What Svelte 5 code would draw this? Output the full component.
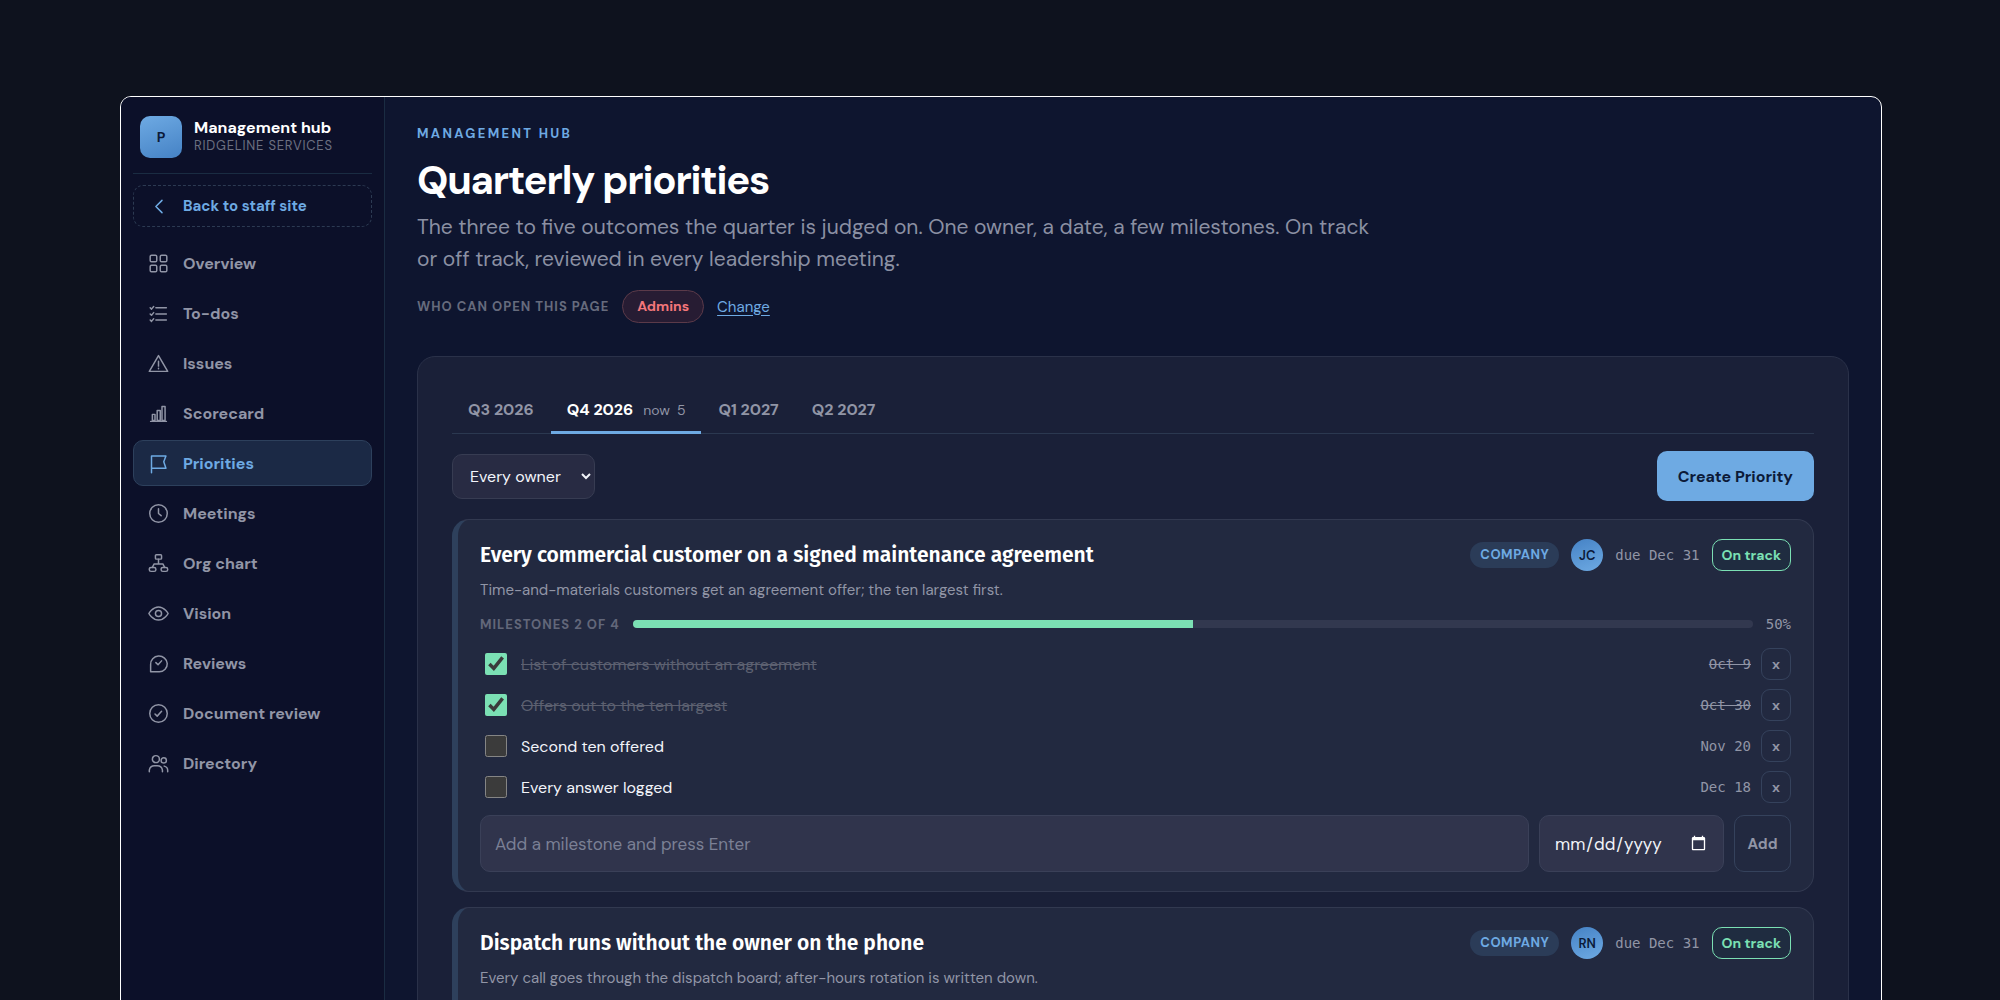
<script>
  const nav = [
    { id: 'overview', label: 'Overview' },
    { id: 'todos', label: 'To-dos' },
    { id: 'issues', label: 'Issues' },
    { id: 'scorecard', label: 'Scorecard' },
    { id: 'priorities', label: 'Priorities' },
    { id: 'meetings', label: 'Meetings' },
    { id: 'org', label: 'Org chart' },
    { id: 'vision', label: 'Vision' },
    { id: 'reviews', label: 'Reviews' },
    { id: 'documents', label: 'Document review' },
    { id: 'directory', label: 'Directory' }
  ];

  const quarters = ['Q3 2026', 'Q4 2026', 'Q1 2027', 'Q2 2027'];
  const currentQuarter = 'Q4 2026';

  let page = $state('priorities');
  let quarter = $state(currentQuarter);
  let owner = $state('');

  let priorities = $state([
    {
      id: 1,
      title: 'Every commercial customer on a signed maintenance agreement',
      description: 'Time-and-materials customers get an agreement offer; the ten largest first.',
      owner: 'JC',
      due: 'Dec 31',
      milestones: [
        { text: 'List of customers without an agreement', due: 'Oct 9', done: true },
        { text: 'Offers out to the ten largest', due: 'Oct 30', done: true },
        { text: 'Second ten offered', due: 'Nov 20', done: false },
        { text: 'Every answer logged', due: 'Dec 18', done: false }
      ]
    },
    {
      id: 2,
      title: 'Dispatch runs without the owner on the phone',
      description: 'Every call goes through the dispatch board; after-hours rotation is written down.',
      owner: 'RN',
      due: 'Dec 31',
      milestones: []
    }
  ]);

  function doneCount(priority) {
    return priority.milestones.filter((m) => m.done).length;
  }

  function percent(priority) {
    return Math.round((doneCount(priority) / priority.milestones.length) * 100);
  }

  function removeMilestone(priority, index) {
    priority.milestones.splice(index, 1);
  }

  function addMilestone(e, priority) {
    e.preventDefault();
    const text = e.target.elements.text.value.trim();
    if (!text) return;
    priority.milestones.push({ text, due: e.target.elements.due.value, done: false });
    e.target.reset();
  }
</script>

{#snippet icon(name)}
  <svg class="icon" viewBox="0 0 24 24" aria-hidden="true">
    {#if name === 'back'}
      <path d="M16 5l-7 7 7 7" />
    {:else if name === 'overview'}
      <rect x="2.500" y="2.500" width="7.500" height="7.500" rx="1.500" />
      <rect x="14" y="2.500" width="7.500" height="7.500" rx="1.500" />
      <rect x="2.500" y="14" width="7.500" height="7.500" rx="1.500" />
      <rect x="14" y="14" width="7.500" height="7.500" rx="1.500" />
    {:else if name === 'todos'}
      <path d="M9 5.500h12M9 12.500h12M9 19.500h12" />
      <path d="M2.500 5.500L4 7l2.500-3M2.500 12.500L4 14l2.500-3M2.500 19.500L4 21l2.500-3" />
    {:else if name === 'issues'}
      <path d="M12 3L22.500 21h-21z" />
      <path d="M12 9.500v5.500M12 17.500v.5" />
    {:else if name === 'scorecard'}
      <path d="M3 21h18" />
      <rect x="5" y="13" width="3" height="7" />
      <rect x="10.500" y="8.500" width="3.500" height="11.500" />
      <rect x="16" y="4" width="3.500" height="16" />
    {:else if name === 'priorities'}
      <path d="M4 22.500V3.500h16.500L18 10l2.500 7.500H4" />
    {:else if name === 'meetings'}
      <circle cx="12" cy="12" r="10" />
      <path d="M12 6.500V12l3 2.500" />
    {:else if name === 'org'}
      <rect x="8.500" y="2" width="7" height="5" rx="1" />
      <rect x="1.500" y="16.500" width="7.500" height="4.500" rx="2" />
      <rect x="15" y="16.500" width="7.500" height="4.500" rx="2" />
      <path d="M12 7v5M5 16.500l2-4h10l2 4" />
    {:else if name === 'vision'}
      <path d="M1 12S5 4.500 12 4.500 23 12 23 12 19 19.500 12 19.500 1 12 1 12z" />
      <circle cx="12" cy="12" r="3.500" />
    {:else if name === 'reviews'}
      <path d="M3 21.500v-8.500A9.500 9 0 1 1 13 21.500z" />
      <path d="M9 11l2.500 2.500 4-4.500" />
    {:else if name === 'documents'}
      <circle cx="12" cy="12" r="10" />
      <path d="M8 12.500l2.500 2.500 5-5.500" />
    {:else}
      <circle cx="9" cy="7" r="4" />
      <path d="M1.500 21.500v-2a6 6 0 0 1 6-5h3a6 6 0 0 1 6 5v2" />
      <circle cx="18" cy="8.500" r="3" />
      <path d="M18.500 15a5 5 0 0 1 4 5v1.500" />
    {/if}
  </svg>
{/snippet}

<div class="page">
  <div class="app">
    <aside class="sidebar">
      <div class="brand">
        <span class="logo">P</span>
        <div class="brand-text">
          <strong>Management hub</strong>
          <span>Ridgeline Services</span>
        </div>
      </div>

      <a class="back" href="#staff">{@render icon('back')}Back to staff site</a>

      <nav>
        {#each nav as item}
          <a
            href="#{item.id}"
            class:active={page === item.id}
            aria-current={page === item.id ? 'page' : undefined}
            onclick={() => (page = item.id)}
          >
            {@render icon(item.id)}{item.label}
          </a>
        {/each}
      </nav>
    </aside>

    <main>
      <p class="eyebrow">Management hub</p>
      <h1>Quarterly priorities</h1>
      <p class="lede">
        The three to five outcomes the quarter is judged on. One owner, a date, a few milestones. On track or off
        track, reviewed in every leadership meeting.
      </p>
      <div class="access">
        <span class="access-label">Who can open this page</span>
        <span class="chip">Admins</span>
        <a href="#access">Change</a>
      </div>

      <section class="panel">
        <div class="tabs" role="tablist">
          {#each quarters as q}
            <button
              type="button"
              role="tab"
              aria-selected={quarter === q}
              class:selected={quarter === q}
              onclick={() => (quarter = q)}
            >
              {q}
              {#if q === currentQuarter}<span class="count"><span>now</span><span>5</span></span>{/if}
            </button>
          {/each}
        </div>

        <div class="toolbar">
          <select aria-label="Owner" bind:value={owner}>
            <option value="">Every owner</option>
            <option value="JC">JC</option>
            <option value="RN">RN</option>
          </select>
          <button type="button" class="primary">Create Priority</button>
        </div>

        {#each priorities as priority (priority.id)}
          <article class="card">
            <header>
              <h2>{priority.title}</h2>
              <span class="tag">Company</span>
              <span class="avatar">{priority.owner}</span>
              <span class="mono">due {priority.due}</span>
              <button type="button" class="status">On track</button>
            </header>
            <p class="description">{priority.description}</p>

            {#if priority.milestones.length}
              <div class="progress">
                <span class="progress-label">Milestones {doneCount(priority)} of {priority.milestones.length}</span>
                <div class="track"><div class="fill" style="width: {percent(priority)}%"></div></div>
                <span class="mono">{percent(priority)}%</span>
              </div>
            {/if}

            <ul>
              {#each priority.milestones as milestone, i}
                <li class:done={milestone.done}>
                  <label>
                    <input type="checkbox" bind:checked={milestone.done} />
                    <span>{milestone.text}</span>
                  </label>
                  <span class="mono">{milestone.due}</span>
                  <button type="button" class="remove" aria-label="Remove milestone" onclick={() => removeMilestone(priority, i)}>x</button>
                </li>
              {/each}
            </ul>

            <form onsubmit={(e) => addMilestone(e, priority)}>
              <input type="text" name="text" aria-label="Milestone" placeholder="Add a milestone and press Enter" />
              <input type="date" name="due" aria-label="Milestone date" />
              <button type="submit">Add</button>
            </form>
          </article>
        {/each}
      </section>
    </main>
  </div>
</div>

<style>
  :global(body) {
    background: #0e121e;
    color-scheme: dark;
  }

  .page {
    --accent: #6eaae3;
    --muted: #9195a6;
    --faint: #666b7d;
    --line: #2b3850;
    --green: #7be0b4;
    box-sizing: border-box;
    height: 100vh;
    overflow: hidden;
    padding: 96px 118px 0 120px;
    color: #f2f4fa;
    font-family: 'DM Sans', Inter, sans-serif;
    font-size: 16px;
  }

  .page :global(*) {
    box-sizing: border-box;
  }

  button,
  input,
  select {
    font-family: inherit;
  }

  .app {
    display: flex;
    border: 1px solid #fff;
    border-radius: 11px;
    background: #0e152f;
    overflow: hidden;
  }

  .sidebar {
    flex: 0 0 264px;
    padding: 10px 12px;
    background: #0c1029;
    border-right: 1px solid #1a2c42;
  }

  .brand {
    display: flex;
    align-items: center;
    gap: 12px;
    padding: 9px 7px 15px;
    margin-bottom: 11px;
    border-bottom: 1px solid #1a2c42;
  }

  .logo {
    display: grid;
    place-items: center;
    width: 42px;
    height: 42px;
    border-radius: 10px;
    background: linear-gradient(160deg, #6eaae3, #4582c5);
    color: #0c1a38;
    font-size: 14px;
    font-weight: 700;
  }

  .brand-text {
    display: flex;
    flex-direction: column;
    line-height: 18px;
  }

  .brand-text strong {
    color: #fff;
    font-size: 16px;
  }

  .brand-text span {
    color: #6b6f80;
    font-size: 13px;
    letter-spacing: 0.06em;
    text-transform: uppercase;
  }

  .icon {
    flex: none;
    width: 21px;
    height: 21px;
    fill: none;
    stroke: currentColor;
    stroke-width: 1.7;
    stroke-linecap: round;
    stroke-linejoin: round;
  }

  .back,
  nav a {
    display: flex;
    align-items: center;
    gap: 14px;
    padding: 0 14px;
    border: 1px solid transparent;
    border-radius: 10px;
    color: var(--muted);
    font-size: 16px;
    font-weight: 700;
    text-decoration: none;
  }

  .back {
    height: 42px;
    margin-bottom: 13px;
    border: 1px dashed #2c3a52;
    color: var(--accent);
    font-size: 15px;
  }

  nav {
    display: flex;
    flex-direction: column;
    gap: 4px;
  }

  nav a {
    height: 46px;
  }

  nav a.active {
    background: #1b2945;
    border-color: #2d405c;
    color: var(--accent);
  }

  main {
    flex: 1;
    min-width: 0;
    padding: 27px 32px 32px;
  }

  .eyebrow {
    margin: 0;
    color: var(--accent);
    font-size: 13px;
    font-weight: 700;
    letter-spacing: 0.18em;
    line-height: 20px;
    text-transform: uppercase;
  }

  h1 {
    margin: 12px 0 7px;
    color: #fff;
    font-size: 40px;
    font-weight: 700;
    letter-spacing: -0.03em;
    line-height: 48px;
  }

  .lede {
    max-width: 960px;
    margin: 0;
    color: #8b90a3;
    font-size: 21px;
    line-height: 32px;
  }

  .access {
    display: flex;
    align-items: center;
    gap: 13px;
    margin: 15px 0 33px;
  }

  .access-label {
    color: var(--faint);
    font-size: 13px;
    font-weight: 700;
    letter-spacing: 1px;
    text-transform: uppercase;
  }

  .chip {
    padding: 0 14px;
    border: 1px solid #5b3a49;
    border-radius: 17px;
    background: #271c33;
    color: #f4767a;
    font-size: 14px;
    font-weight: 700;
    line-height: 31px;
  }

  .access a {
    color: var(--accent);
    font-size: 15px;
    text-underline-offset: 3px;
  }

  .panel {
    padding: 31px 34px;
    border: 1px solid #2a3149;
    border-radius: 18px;
    background: #1a2038;
  }

  .tabs {
    display: flex;
    gap: 1px;
    margin-bottom: 17px;
    border-bottom: 1px solid var(--line);
  }

  .tabs button {
    display: flex;
    align-items: center;
    gap: 10px;
    height: 46px;
    margin-bottom: -1px;
    padding: 0 16px;
    border: 0;
    border-bottom: 3px solid transparent;
    background: none;
    color: var(--muted);
    font-size: 16px;
    font-weight: 700;
  }

  .tabs button.selected {
    border-bottom-color: var(--accent);
    color: #fff;
  }

  .count {
    display: flex;
    gap: 7px;
    color: var(--muted);
    font-size: 14px;
    font-weight: 400;
  }

  .toolbar {
    display: flex;
    align-items: center;
    justify-content: space-between;
    margin-bottom: 18px;
  }

  select {
    width: 143px;
    height: 45px;
    padding: 0 0 0 13px;
    border: 1px solid #373c52;
    border-radius: 10px;
    background: #282b43;
    color: #f2f4fa;
    font-size: 16px;
  }

  .primary {
    height: 50px;
    padding: 0 21px;
    border: 0;
    border-radius: 10px;
    background: #6eaae3;
    color: #0c1a38;
    font-size: 16px;
    font-weight: 700;
  }

  .card {
    margin-bottom: 15px;
    padding: 19px 22px;
    border: 1px solid #323950;
    border-left: 6px solid #2e405c;
    border-radius: 17px;
    background: #222940;
  }

  .card header {
    display: flex;
    align-items: center;
    gap: 12px;
    height: 32px;
  }

  h2 {
    flex: 1;
    margin: 0;
    color: #fff;
    font-family: 'Fira Sans', 'Noto Sans', sans-serif;
    font-size: 21px;
    font-weight: 600;
  }

  .tag {
    padding: 0 10px;
    border-radius: 13px;
    background: #2b3c58;
    color: var(--accent);
    font-size: 13px;
    font-weight: 700;
    letter-spacing: 0.04em;
    line-height: 26px;
    text-transform: uppercase;
  }

  .avatar {
    display: grid;
    place-items: center;
    width: 32px;
    height: 32px;
    border-radius: 50%;
    background: linear-gradient(160deg, #4582c5, #6eaae3);
    color: #0c1a38;
    font-size: 13px;
    font-weight: 600;
  }

  .mono {
    color: var(--muted);
    font-family: Consolas, 'DejaVu Sans Mono', monospace;
    font-size: 14px;
  }

  .status {
    height: 32px;
    padding: 0 9px;
    border: 1px solid var(--green);
    border-radius: 10px;
    background: #1f2c40;
    color: var(--green);
    font-size: 14px;
    font-weight: 700;
  }

  .description {
    margin: 7px 0 5px;
    color: var(--muted);
    font-size: 15px;
    line-height: 24px;
  }

  .progress {
    display: flex;
    align-items: center;
    gap: 13px;
    height: 34px;
    margin-bottom: 7px;
  }

  .progress-label {
    color: #62677a;
    font-size: 13px;
    font-weight: 700;
    letter-spacing: 1px;
    text-transform: uppercase;
  }

  .track {
    flex: 1;
    height: 8px;
    border-radius: 4px;
    background: #32384f;
    overflow: hidden;
  }

  .fill {
    height: 100%;
    background: var(--green);
  }

  ul {
    display: flex;
    flex-direction: column;
    gap: 9px;
    margin: 0 0 12px;
    padding: 0;
    list-style: none;
  }

  li {
    display: flex;
    align-items: center;
    gap: 10px;
    height: 32px;
  }

  li label {
    display: flex;
    flex: 1;
    align-items: center;
    gap: 14px;
    font-size: 16px;
  }

  li input {
    width: 22px;
    height: 22px;
    margin: 0 0 0 5px;
    accent-color: #7be0b4;
  }

  li.done label span {
    color: #5c6070;
    text-decoration: line-through;
  }

  li.done .mono {
    text-decoration: line-through;
  }

  .remove {
    width: 30px;
    height: 32px;
    padding: 0;
    border: 1px solid #35425c;
    border-radius: 9px;
    background: none;
    color: var(--muted);
    font-size: 14px;
    font-weight: 700;
  }

  form {
    display: flex;
    gap: 10px;
  }

  form input {
    height: 57px;
    padding: 0 14px;
    border: 1px solid #3a4058;
    border-radius: 10px;
    background: #30344c;
    color: #f2f4fa;
    font-size: 17px;
  }

  form input[type='text'] {
    flex: 1;
    min-width: 0;
  }

  form input[type='date'] {
    width: 185px;
  }

  form input::placeholder {
    color: #7b8095;
  }

  form button {
    width: 57px;
    padding: 0;
    border: 1px solid #35425c;
    border-radius: 10px;
    background: none;
    color: var(--muted);
    font-size: 15px;
    font-weight: 700;
  }
</style>
